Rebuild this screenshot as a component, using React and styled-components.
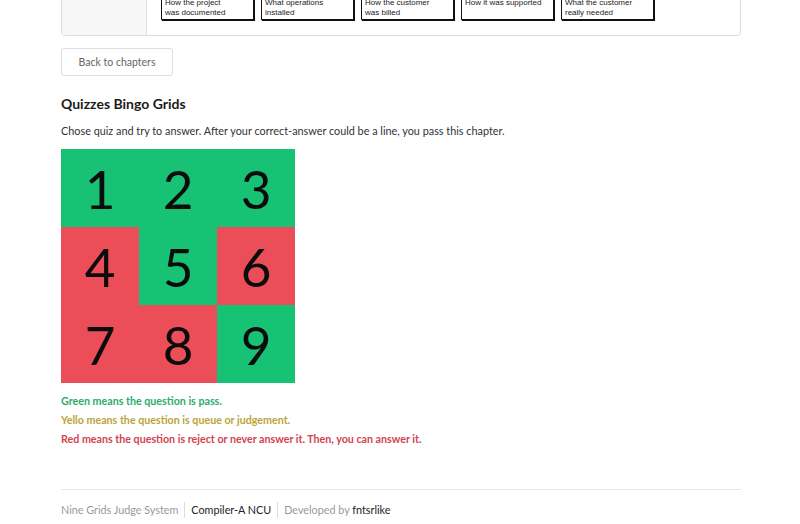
import React from "react";
import styled, { createGlobalStyle } from "styled-components";

const GlobalStyle = createGlobalStyle`
  html, body {
    margin: 0;
    padding: 0;
    background: #fff;
    font-family: Lato, "Helvetica Neue", Arial, sans-serif;
    color: #222;
  }
`;

const captions = [
  ["How the project", "was documented"],
  ["What operations", "installed"],
  ["How the customer", "was billed"],
  ["How it was supported", ""],
  ["What the customer", "really needed"],
];

const cells = [
  { n: 1, pass: true },
  { n: 2, pass: true },
  { n: 3, pass: true },
  { n: 4, pass: false },
  { n: 5, pass: true },
  { n: 6, pass: false },
  { n: 7, pass: false },
  { n: 8, pass: false },
  { n: 9, pass: true },
];

export default function App() {
  return (
    <>
      <GlobalStyle />
      <Page>
        <Card>
          <DefCell />
          <CaptionRow>
            {captions.map((c, i) => (
              <Caption key={i}>
                {c[0]}
                <br />
                {c[1]}
              </Caption>
            ))}
          </CaptionRow>
        </Card>

        <Button>Back to chapters</Button>

        <Title>Quizzes Bingo Grids</Title>
        <Intro>
          Chose quiz and try to answer. After your correct-answer could be a line, you pass this chapter.
        </Intro>

        <Grid>
          {cells.map((c) => (
            <Cell key={c.n} $pass={c.pass}>
              {c.n}
            </Cell>
          ))}
        </Grid>

        <Legend>
          <Note $color="#2aac6c">Green means the question is pass.</Note>
          <Note $color="#bba438">Yello means the question is queue or judgement.</Note>
          <Note $color="#d4424e">Red means the question is reject or never answer it. Then, you can answer it.</Note>
        </Legend>

        <Footer>
          <FootItem>Nine Grids Judge System</FootItem>
          <FootItem $dark>Compiler-A NCU</FootItem>
          <FootItem>
            Developed by <Strong>fntsrlike</Strong>
          </FootItem>
        </Footer>
      </Page>
    </>
  );
}

const Page = styled.div`
  width: 680px;
  margin: 0 0 0 61px;
  padding-bottom: 20px;
`;

const Card = styled.div`
  margin-top: -40px;
  display: grid;
  grid-template-columns: 85px 1fr;
  border: 1px solid #dcdcdc;
  border-radius: 4px;
  overflow: hidden;
`;

const DefCell = styled.div`
  background: #f7f7f7;
  border-right: 1px solid #e3e3e3;
`;

const CaptionRow = styled.div`
  display: flex;
  gap: 7px;
  padding: 35px 0 15px 14px;
`;

const Caption = styled.div`
  width: 85px;
  height: 20px;
  padding: 1px 3px;
  border: 1px solid #111;
  box-shadow: 1px 1px 0 #111;
  font-family: "Liberation Sans", Arial, sans-serif;
  font-size: 8px;
  line-height: 10px;
  color: #222;
  white-space: nowrap;
`;

const Button = styled.button`
  display: block;
  margin-top: 12px;
  width: 112px;
  height: 28px;
  background: #fff;
  border: 1px solid #dedede;
  border-radius: 3px;
  font-family: Lato, sans-serif;
  font-size: 10.5px;
  color: #666;
  padding: 0;
`;

const Title = styled.h3`
  margin: 19px 0 0;
  font-size: 14px;
  line-height: 18px;
  font-weight: 700;
  color: #1b1b1b;
`;

const Intro = styled.p`
  margin: 10px 0 0;
  font-size: 10.85px;
  line-height: 16px;
  color: #333;
`;

const Grid = styled.div`
  margin-top: 10px;
  display: grid;
  grid-template-columns: repeat(3, 78px);
  grid-template-rows: repeat(3, 78px);
`;

const Cell = styled.div`
  display: flex;
  align-items: center;
  justify-content: center;
  background: ${(p) => (p.$pass ? "#17c274" : "#eb4e58")};
  color: #0c0c0c;
  font-size: 53px;
  font-weight: 400;
  line-height: 1;
`;

const Legend = styled.div`
  margin-top: 8px;
`;

const Note = styled.div`
  font-size: 10.7px;
  line-height: 19px;
  font-weight: 700;
  color: ${(p) => p.$color};
`;

const Footer = styled.div`
  margin-top: 41px;
  border-top: 1px solid #e8e8e8;
  padding-top: 12px;
  display: flex;
  align-items: center;
`;

const FootItem = styled.div`
  font-size: 10.8px;
  line-height: 16px;
  color: ${(p) => (p.$dark ? "#222" : "#999")};
  padding: 0 6px;
  border-left: 1px solid #ddd;
  &:first-child {
    padding-left: 0;
    padding-right: 6px;
    border-left: none;
  }
`;

const Strong = styled.span`
  color: #222;
`;
